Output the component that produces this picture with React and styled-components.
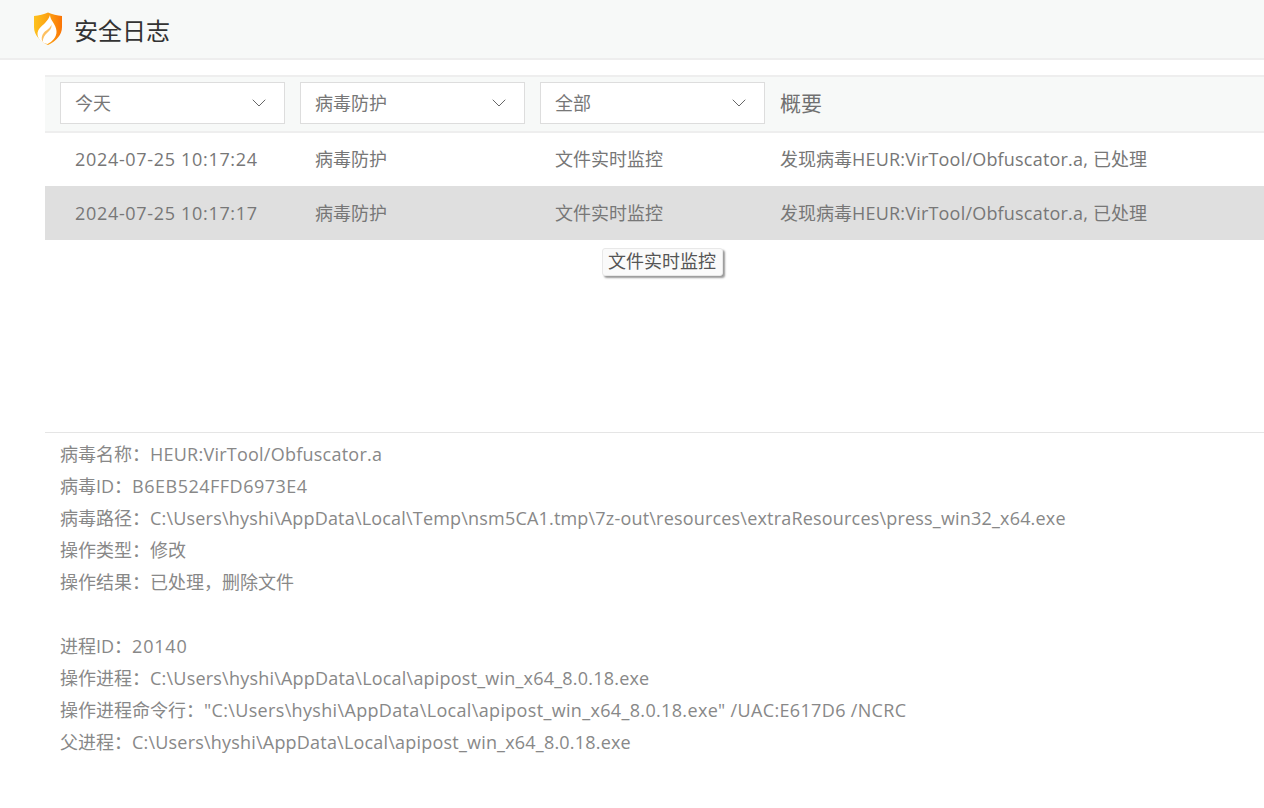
import React from "react";
import styled, { createGlobalStyle } from "styled-components";
import { ChevronDown } from "lucide-react";

const GlobalStyle = createGlobalStyle`
  html, body {
    margin: 0;
    padding: 0;
    background: #fff;
    font-family: "Open Sans", "Noto Sans CJK SC", sans-serif;
  }
`;

const rows = [
  { time: "2024-07-25 10:17:24", active: false },
  { time: "2024-07-25 10:17:17", active: true },
];

const localDir = "C:\\Users\\hyshi\\AppData\\Local";

const details = [
  { label: "病毒名称：", value: "HEUR:VirTool/Obfuscator.a", spacing: 0.24 },
  { label: "病毒ID：", value: "B6EB524FFD6973E4", spacing: 0.5 },
  { label: "病毒路径：", value: `${localDir}\\Temp\\nsm5CA1.tmp\\7z-out\\resources\\extraResources\\press_win32_x64.exe`, spacing: 0.19 },
  { label: "操作类型：", value: "修改" },
  { label: "操作结果：", value: "已处理，删除文件" },
  { label: "" },
  { label: "进程ID：", value: "20140", spacing: 0.8 },
  { label: "操作进程：", value: `${localDir}\\apipost_win_x64_8.0.18.exe`, spacing: 0.21 },
  { label: "操作进程命令行：", value: `"${localDir}\\apipost_win_x64_8.0.18.exe" /UAC:E617D6 /NCRC`, spacing: 0.34 },
  { label: "父进程：", value: `${localDir}\\apipost_win_x64_8.0.18.exe`, spacing: 0.2 },
];

const Logo = () => (
  <svg width="30" height="34" viewBox="0 0 30 34">
    <defs>
      <linearGradient id="shield" x1="0" y1="0" x2="1" y2="0">
        <stop offset="0" stopColor="#fdc21e" />
        <stop offset="0.6" stopColor="#fc9a10" />
        <stop offset="1" stopColor="#fb7406" />
      </linearGradient>
    </defs>
    <path d="M1 4 C6 3.500 11 2.500 15 .5 C19 2.500 24 3.500 29 4 V15 C29 23 23 29 15 33 C7 29 1 23 1 15 Z" fill="url(#shield)" />
    <path d="M17 3 C17 8 23 12 23.500 19 C24 25 19 30 14.500 32 C9 31 4.500 27 4.500 22 C4.500 17 9 14 12 11 C14.500 8.500 16 6 17 3 Z" fill="#fff" />
    <path d="M18.500 12.500 C19 16 17 18.500 14 21 C11.500 23 10 26 9.500 30 C8 27 8.500 23.500 11 20.500 C13.500 18 17 16.500 18.500 12.500 Z" fill="#fcab2c" opacity="0.75" />
  </svg>
);

const App = () => {
  return (
    <Page>
      <GlobalStyle />
      <Header>
        <Logo />
        <Title>安全日志</Title>
      </Header>
      <Main>
        <Toolbar>
          <Select><span>今天</span><ChevronDown size={24} strokeWidth={1} /></Select>
          <Select><span>病毒防护</span><ChevronDown size={24} strokeWidth={1} /></Select>
          <Select><span>全部</span><ChevronDown size={24} strokeWidth={1} /></Select>
          <SummaryHead>概要</SummaryHead>
        </Toolbar>
        <List>
          {rows.map((row) => (
            <Row key={row.time} active={row.active}>
              <Cell><Latin spacing={0.68}>{row.time}</Latin></Cell>
              <Cell>病毒防护</Cell>
              <Cell>文件实时监控</Cell>
              <Cell>发现病毒<Latin spacing={0.2}>HEUR:VirTool/Obfuscator.a, </Latin>已处理</Cell>
            </Row>
          ))}
          <Tooltip>文件实时监控</Tooltip>
        </List>
        <Details>
          {details.map((line, i) => (
            <Line key={i}>
              {line.label}
              {line.value && <Latin spacing={line.spacing || 0}>{line.value}</Latin>}
            </Line>
          ))}
        </Details>
      </Main>
    </Page>
  );
};

const Page = styled.div`
  width: 1264px;
  height: 808px;
  overflow: hidden;
  background: #fff;
`;

const Header = styled.div`
  height: 58px;
  padding-left: 33px;
  display: flex;
  align-items: center;
  gap: 11px;
  background: #f7f9f8;
  border-bottom: 2px solid #eeeeee;
`;

const Title = styled.div`
  font-size: 24px;
  color: #333;
`;

const Main = styled.div`
  margin-left: 45px;
  padding-top: 15px;
`;

const Toolbar = styled.div`
  box-sizing: border-box;
  height: 58px;
  display: grid;
  grid-template-columns: 240px 240px 225px 1fr;
  align-items: start;
  padding: 5px 0 0 15px;
  background: #f7f9f8;
  border-top: 2px solid #eeeeee;
  border-bottom: 2px solid #eeeeee;
`;

const Select = styled.div`
  box-sizing: border-box;
  width: 225px;
  height: 42px;
  padding: 0 13px 0 14px;
  display: flex;
  align-items: center;
  justify-content: space-between;
  background: #fff;
  border: 1px solid #dddddd;
  font-size: 18px;
  line-height: 40px;
  color: #777;
  svg {
    color: #666;
  }
`;

const SummaryHead = styled.div`
  margin-left: 15px;
  font-size: 21px;
  line-height: 42px;
  color: #707070;
`;

const List = styled.div`
  position: relative;
  height: 299px;
  border-bottom: 1px solid #e5e5e5;
`;

const Row = styled.div`
  height: ${(p) => (p.active ? 54 : 53)}px;
  line-height: ${(p) => (p.active ? 54 : 52)}px;
  display: grid;
  grid-template-columns: 240px 240px 225px 1fr;
  padding-left: 30px;
  background: ${(p) => (p.active ? "#dfdfdf" : "#fff")};
`;

const Cell = styled.div`
  font-size: 18px;
  color: #777;
  white-space: nowrap;
`;

const Latin = styled.span`
  letter-spacing: ${(p) => p.spacing}px;
`;

const Tooltip = styled.div`
  position: absolute;
  left: 557px;
  top: 115px;
  height: 28px;
  padding: 0 6px 0 5px;
  box-sizing: border-box;
  font-size: 18px;
  line-height: 24px;
  color: #555;
  background: #fafafa;
  border: 1px solid #e8e8e8;
  border-radius: 3px;
  box-shadow: 2px 2px 2px #999;
`;

const Details = styled.div`
  padding: 5px 0 0 15px;
`;

const Line = styled.div`
  height: 32px;
  line-height: 32px;
  font-size: 18px;
  color: #888;
  white-space: nowrap;
`;

export default App;
